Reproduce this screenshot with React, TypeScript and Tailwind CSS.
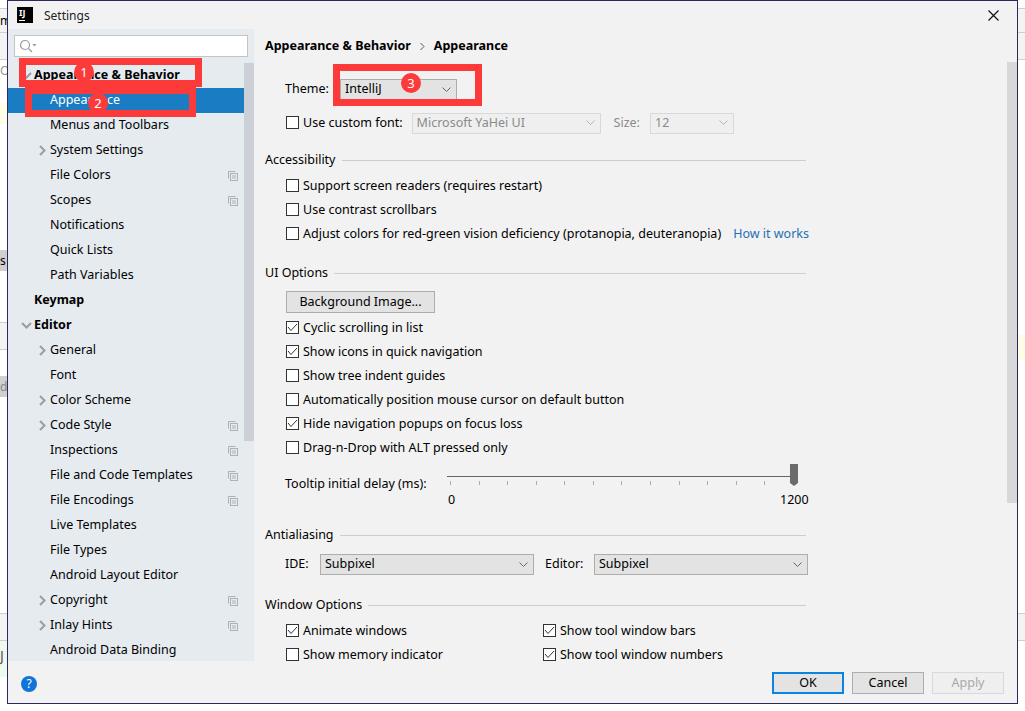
import React from "react";

const font = { fontFamily: '"Noto Sans", sans-serif' };

function Chevron({ className = "" }: { className?: string }) {
  return (
    <svg width="9" height="6" viewBox="0 0 9 6" className={className} fill="none" stroke="currentColor" strokeWidth="1">
      <path d="M0.5 0.5 L4.5 4.5 L8.5 0.5" />
    </svg>
  );
}

function ArrowRight() {
  return (
    <svg width="7" height="11" viewBox="0 0 7 11" fill="none" stroke="#9a9ea3" strokeWidth="2">
      <path d="M1 1 L5.5 5.5 L1 10" />
    </svg>
  );
}

function ArrowDown() {
  return (
    <svg width="11" height="7" viewBox="0 0 11 7" fill="none" stroke="#9a9ea3" strokeWidth="2">
      <path d="M1 1 L5.5 5.5 L10 1" />
    </svg>
  );
}

function CopyIcon() {
  return (
    <svg width="10" height="10" viewBox="0 0 10 10" fill="none" stroke="#aab2b8" strokeWidth="1">
      <path d="M0.5 7.5 V0.5 H7.5" />
      <rect x="2.5" y="2.5" width="7" height="7" />
      <path d="M4 5 H8 M4 7 H8" />
    </svg>
  );
}

type Row = { t: string; lvl: 0 | 1; bold?: boolean; arrow?: "r" | "d"; copy?: boolean; sel?: boolean };

const rows: Row[] = [
  { t: "Appearance & Behavior", lvl: 0, bold: true, arrow: "d" },
  { t: "Appearance", lvl: 1, sel: true },
  { t: "Menus and Toolbars", lvl: 1 },
  { t: "System Settings", lvl: 1, arrow: "r" },
  { t: "File Colors", lvl: 1, copy: true },
  { t: "Scopes", lvl: 1, copy: true },
  { t: "Notifications", lvl: 1 },
  { t: "Quick Lists", lvl: 1 },
  { t: "Path Variables", lvl: 1 },
  { t: "Keymap", lvl: 0, bold: true },
  { t: "Editor", lvl: 0, bold: true, arrow: "d" },
  { t: "General", lvl: 1, arrow: "r" },
  { t: "Font", lvl: 1 },
  { t: "Color Scheme", lvl: 1, arrow: "r" },
  { t: "Code Style", lvl: 1, arrow: "r", copy: true },
  { t: "Inspections", lvl: 1, copy: true },
  { t: "File and Code Templates", lvl: 1, copy: true },
  { t: "File Encodings", lvl: 1, copy: true },
  { t: "Live Templates", lvl: 1 },
  { t: "File Types", lvl: 1 },
  { t: "Android Layout Editor", lvl: 1 },
  { t: "Copyright", lvl: 1, arrow: "r", copy: true },
  { t: "Inlay Hints", lvl: 1, arrow: "r", copy: true },
  { t: "Android Data Binding", lvl: 1 },
];

function TreeRow({ r }: { r: Row }) {
  return (
    <div className={`relative h-[25px] flex items-center text-[12.5px] leading-none ${r.sel ? "bg-[#1a7dc4] text-white" : "text-black"}`}>
      {r.arrow && (
        <span className={`absolute flex items-center justify-center w-[11px] h-[11px] ${r.lvl === 0 ? "left-[13px]" : "left-[29px]"}`}>
          {r.arrow === "r" ? <ArrowRight /> : <ArrowDown />}
        </span>
      )}
      <span className={`${r.lvl === 0 ? "ml-[26px]" : "ml-[42px]"} ${r.bold ? "font-bold" : ""}`}>{r.t}</span>
      {r.copy && <span className="absolute left-[220px] top-[8px] flex"><CopyIcon /></span>}
    </div>
  );
}

function Check({ on = false, label }: { on?: boolean; label: string }) {
  return (
    <label className="flex items-center h-[24px] text-[12.5px] leading-none text-black">
      <span className="w-[13px] h-[13px] mb-[2px] border border-[#333] bg-white flex items-center justify-center mr-[4px]">
        {on && (
          <svg width="11" height="9" viewBox="0 0 11 9" fill="none" stroke="#333" strokeWidth="1">
            <path d="M1 4 L4 7.5 L10 1" />
          </svg>
        )}
      </span>
      <span>{label}</span>
    </label>
  );
}

function Section({ title }: { title: string }) {
  return (
    <div className="flex items-center h-[16px] w-[541px]">
      <span className="text-[12.5px] leading-none text-black mr-[6px]">{title}</span>
      <span className="flex-1 h-px bg-[#cdcdcd]" />
    </div>
  );
}

function Combo({ text, w, disabled = false }: { text: string; w: string; disabled?: boolean }) {
  return (
    <div className={`${w} h-[21px] flex items-center justify-between px-[4px] border text-[12.5px] leading-none ${disabled ? "border-[#d9d9d9] bg-[#efefef] text-[#8a8a8a]" : "border-[#adadad] bg-[#e3e3e3] text-black"}`}>
      <span>{text}</span>
      <Chevron className={`mr-[1px] ${disabled ? "text-[#b5b5b5]" : "text-[#666]"}`} />
    </div>
  );
}

function Btn({ t, cls }: { t: string; cls: string }) {
  return (
    <div className={`w-[72px] h-[22px] flex items-center justify-center text-[12.5px] leading-none ${cls}`}>{t}</div>
  );
}

export default function App() {
  return (
    <div style={font} className="relative w-[1025px] h-[711px] bg-white overflow-hidden">
      {/* background window fragments */}
      <div className="absolute left-0 top-[8px] w-[7px] h-[25px] bg-[#f3f3f3] border-y border-[#cfcfcf] text-[12px] leading-[23px] text-black overflow-hidden">m</div>
      <div className="absolute left-0 top-[33px] w-[7px] h-[27px] bg-[#f3f3f3] border-b border-[#cfcfcf]" />
      <div className="absolute left-0 top-[65px] w-[7px] h-[12px] text-[12px] leading-none text-[#999] overflow-hidden">O</div>
      <div className="absolute left-0 top-[103px] w-[7px] h-[21px] bg-[#fffde8]" />
      <div className="absolute left-0 top-[250px] w-[7px] h-[21px] bg-[#d0d0d0] text-[12px] leading-[21px] overflow-hidden">s</div>
      <div className="absolute left-0 top-[322px] w-[7px] h-[28px] bg-[#f3f3f3] border-y border-[#cfcfcf]" />
      <div className="absolute left-0 top-[376px] w-[7px] h-[21px] bg-[#d0d0d0] text-[12px] leading-[21px] text-[#888] overflow-hidden">d</div>
      <div className="absolute left-0 top-[613px] w-[7px] h-[27px] bg-[#f3f3f3] border-t border-[#cfcfcf]" />
      <div className="absolute left-0 top-[640px] w-[7px] h-[37px] bg-[#eefaee] border-t border-[#cfcfcf] text-[14px] leading-[30px] text-[#555] overflow-hidden">J</div>
      <div className="absolute left-[1018px] top-[8px] w-[7px] h-[25px] bg-[#f3f3f3] border-y border-[#cfcfcf]" />
      <div className="absolute left-[1018px] top-[33px] w-[7px] h-[27px] bg-[#f3f3f3] border-b border-[#cfcfcf]" />
      <div className="absolute left-[1018px] top-[335px] w-[7px] h-[25px] bg-[#fffde8]" />
      <div className="absolute left-[1018px] top-[613px] w-[7px] h-[28px] bg-[#f3f3f3] border-y border-[#cfcfcf]" />

      {/* dialog */}
      <div className="absolute left-[7px] top-0 w-[1011px] h-[704px] border border-[#2f2760] bg-[#f2f2f2] flex flex-col">
        <div className="h-[28px] shrink-0 flex items-center relative">
          <div className="ml-[9px] w-[16px] h-[16px] bg-black text-white text-[9px] font-bold leading-[11px] pl-[2px] relative">
            IJ
            <span className="absolute left-[2px] bottom-[2px] w-[6px] h-px bg-white" />
          </div>
          <span className="ml-[11px] mt-[2px] text-[12px] leading-none text-[#222]">Settings</span>
          <svg className="absolute right-[18px] top-[9px]" width="11" height="11" viewBox="0 0 11 11" fill="none" stroke="#111" strokeWidth="1.2">
            <path d="M0.5 0.5 L10.5 10.5 M10.5 0.5 L0.5 10.5" />
          </svg>
        </div>

        <div className="flex h-[632px] shrink-0">
          {/* sidebar */}
          <div className="w-[246px] shrink-0 bg-[#e6ebf0] relative overflow-hidden">
            <div className="h-[34px] pt-[6px] pl-[6px]">
              <div className="w-[234px] h-[22px] bg-white border border-[#c4c4c4] flex items-center pl-[4px]">
                <svg width="18" height="14" viewBox="0 0 18 14" fill="none" stroke="#9a9a9a" strokeWidth="1.2">
                  <circle cx="6" cy="6" r="4.5" />
                  <path d="M9.5 9.5 L13 13" />
                  <path d="M13.5 5 H17.5 L15.5 7.5 Z" fill="#9a9a9a" stroke="none" />
                </svg>
              </div>
            </div>
            {rows.map((r) => (
              <TreeRow key={r.t} r={r} />
            ))}
            <div className="absolute left-[236px] top-[34px] w-[10px] h-[378px] bg-[#ccd0d6]" />
          </div>

          {/* content */}
          <div className="flex-1 relative overflow-hidden pl-[11px]">
            <div className="h-[34px] pt-[1px] flex items-center text-[12.5px] leading-none font-bold text-black">
              <span>Appearance &amp; Behavior</span>
              <svg className="mx-[9px]" width="5" height="9" viewBox="0 0 5 9" fill="none" stroke="#555" strokeWidth="1">
                <path d="M0.5 1 L4 4.5 L0.5 8" />
              </svg>
              <span>Appearance</span>
            </div>

            <div className="pl-[20px] mt-[16px] flex items-center h-[21px] text-[12.5px] leading-none">
              <span className="w-[55px]">Theme:</span>
              <Combo text="IntelliJ" w="w-[117px]" />
            </div>
            <div className="pl-[21px] mt-[11px] flex items-center h-[24px]">
              <Check label="Use custom font:" />
              <div className="ml-[9px]"><Combo text="Microsoft YaHei UI" w="w-[189px]" disabled /></div>
              <span className="ml-[13px] mr-[10px] text-[12.5px] leading-none text-[#8a8a8a]">Size:</span>
              <Combo text="12" w="w-[84px]" disabled />
            </div>

            <div className="mt-[17px]"><Section title="Accessibility" /></div>
            <div className="pl-[21px] mt-[6px]">
              <Check label="Support screen readers (requires restart)" />
              <Check label="Use contrast scrollbars" />
              <div className="flex items-center">
                <Check label="Adjust colors for red-green vision deficiency (protanopia, deuteranopia)" />
                <span className="ml-[12px] text-[12.5px] leading-none text-[#2470b3]">How it works</span>
              </div>
            </div>

            <div className="mt-[19px]"><Section title="UI Options" /></div>
            <div className="pl-[21px] mt-[10px]">
              <div className="w-[149px] h-[22px] border border-[#adadad] bg-[#e3e3e3] flex items-center justify-center text-[12.5px] leading-none mb-[3px]">Background Image...</div>
              <Check on label="Cyclic scrolling in list" />
              <Check on label="Show icons in quick navigation" />
              <Check label="Show tree indent guides" />
              <Check label="Automatically position mouse cursor on default button" />
              <Check on label="Hide navigation popups on focus loss" />
              <Check label="Drag-n-Drop with ALT pressed only" />
            </div>

            <div className="pl-[20px] mt-[4px] flex h-[47px] text-[12.5px] leading-none text-black">
              <span className="mt-[14px] w-[162px]">Tooltip initial delay (ms):</span>
              <div className="relative w-[360px] h-[47px]">
                <div className="absolute left-0 top-[12px] w-[343px] h-px bg-[#666]" />
                <div className="absolute left-[3px] top-[17px] w-[344px] flex justify-between">
                  {Array.from({ length: 13 }).map((_, i) => (
                    <span key={i} className="w-px h-[4px] bg-[#aaa]" />
                  ))}
                </div>
                <svg className="absolute left-[343px] top-0" width="8" height="22" viewBox="0 0 8 22">
                  <path d="M0 0 H8 V19 L4 22 L0 19 Z" fill="#6b6b6b" />
                </svg>
                <span className="absolute left-[1px] top-[30px]">0</span>
                <span className="absolute left-[333px] top-[30px]">1200</span>
              </div>
            </div>

            <div className="mt-[16px]"><Section title="Antialiasing" /></div>
            <div className="pl-[20px] mt-[11px] flex items-center h-[21px] text-[12.5px] leading-none">
              <span className="w-[35px]">IDE:</span>
              <Combo text="Subpixel" w="w-[214px]" />
              <span className="ml-[11px] w-[49px]">Editor:</span>
              <Combo text="Subpixel" w="w-[214px]" />
            </div>

            <div className="mt-[22px]"><Section title="Window Options" /></div>
            <div className="pl-[21px] mt-[6px] grid grid-cols-[257px_1fr]">
              <Check on label="Animate windows" />
              <Check on label="Show tool window bars" />
              <Check label="Show memory indicator" />
              <Check on label="Show tool window numbers" />
            </div>

            <div className="absolute right-0 top-[33px] w-[10px] h-[441px] bg-[#d8d8d8]" />
          </div>
        </div>

        {/* footer */}
        <div className="flex-1 flex items-center relative">
          <div className="ml-[13px] mt-[4px] w-[16px] h-[16px] rounded-full bg-[#0f76d8] text-white text-[12px] leading-[16px] text-center">?</div>
          <div className="absolute left-[764px] top-[11px] flex gap-[8px]">
            <Btn t="OK" cls="border-2 border-[#0a84e0] bg-[#e3e3e3] text-black" />
            <Btn t="Cancel" cls="border border-[#adadad] bg-[#e3e3e3] text-black" />
            <Btn t="Apply" cls="border border-[#d9d9d9] bg-[#efefef] text-[#a8a8a8]" />
          </div>
        </div>
      </div>

      {/* red annotations */}
      <div className="absolute left-[19px] top-[58px] w-[183px] h-[29px] border-[7px] border-[#fd3a3a]" />
      <div className="absolute left-[25px] top-[87px] w-[171px] h-[30px] border-[7px] border-[#fd3a3a]" />
      <div className="absolute left-[333px] top-[64px] w-[149px] h-[42px] border-[7px] border-[#fd3a3a]" />
      <div className="absolute left-[74px] top-[62px] w-[20px] h-[20px] rounded-full bg-[#fd3a3a] text-white text-[13px] leading-[20px] text-center">1</div>
      <div className="absolute left-[88px] top-[93px] w-[20px] h-[20px] rounded-full bg-[#fd3a3a] text-white text-[13px] leading-[20px] text-center">2</div>
      <div className="absolute left-[401px] top-[73px] w-[20px] h-[20px] rounded-full bg-[#fd3a3a] text-white text-[13px] leading-[20px] text-center">3</div>
    </div>
  );
}
